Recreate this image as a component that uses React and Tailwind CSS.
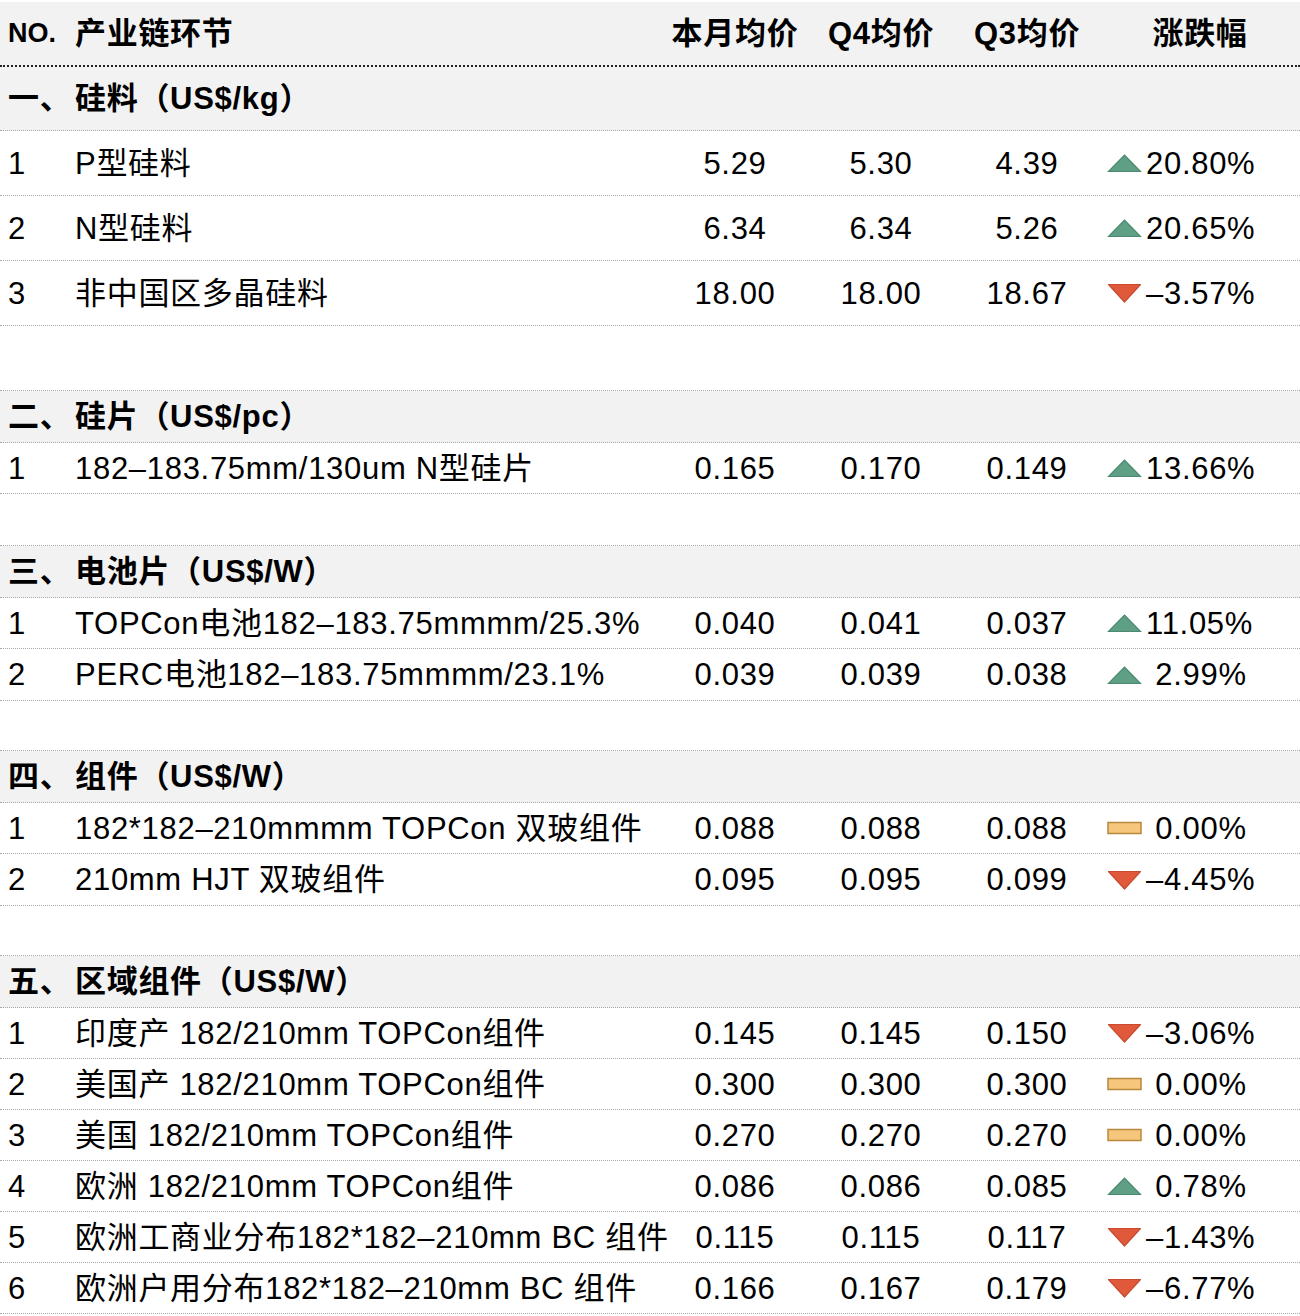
import React from 'react';

// 行类型: head 分节标题, item 数据行, gap 空行
const rows = [
  { type: 'head', h: 'h-[64px]', no: '一、', name: '硅料（US$/kg）' },
  { type: 'item', h: 'h-[65px]', no: '1', name: 'P型硅料', m: '5.29', q4: '5.30', q3: '4.39', dir: 'up', chg: '20.80%' },
  { type: 'item', h: 'h-[65px]', no: '2', name: 'N型硅料', m: '6.34', q4: '6.34', q3: '5.26', dir: 'up', chg: '20.65%' },
  { type: 'item', h: 'h-[65px]', no: '3', name: '非中国区多晶硅料', m: '18.00', q4: '18.00', q3: '18.67', dir: 'down', chg: '–3.57%' },
  { type: 'gap', h: 'h-[65px]' },
  { type: 'head', h: 'h-[52px]', no: '二、', name: '硅片（US$/pc）' },
  { type: 'item', h: 'h-[51px]', no: '1', name: '182–183.75mm/130um N型硅片', m: '0.165', q4: '0.170', q3: '0.149', dir: 'up', chg: '13.66%' },
  { type: 'gap', h: 'h-[52px]' },
  { type: 'head', h: 'h-[52px]', no: '三、', name: '电池片（US$/W）' },
  { type: 'item', h: 'h-[51px]', no: '1', name: 'TOPCon电池182–183.75mmmm/25.3%', m: '0.040', q4: '0.041', q3: '0.037', dir: 'up', chg: '11.05%' },
  { type: 'item', h: 'h-[52px]', no: '2', name: 'PERC电池182–183.75mmmm/23.1%', m: '0.039', q4: '0.039', q3: '0.038', dir: 'up', chg: ' 2.99%' },
  { type: 'gap', h: 'h-[50px]' },
  { type: 'head', h: 'h-[52px]', no: '四、', name: '组件（US$/W）' },
  { type: 'item', h: 'h-[51px]', no: '1', name: '182*182–210mmmm TOPCon 双玻组件', m: '0.088', q4: '0.088', q3: '0.088', dir: 'flat', chg: ' 0.00%' },
  { type: 'item', h: 'h-[52px]', no: '2', name: '210mm HJT 双玻组件', m: '0.095', q4: '0.095', q3: '0.099', dir: 'down', chg: '–4.45%' },
  { type: 'gap', h: 'h-[50px]' },
  { type: 'head', h: 'h-[52px]', no: '五、', name: '区域组件（US$/W）' },
  { type: 'item', h: 'h-[51px]', no: '1', name: '印度产 182/210mm TOPCon组件', m: '0.145', q4: '0.145', q3: '0.150', dir: 'down', chg: '–3.06%' },
  { type: 'item', h: 'h-[51px]', no: '2', name: '美国产 182/210mm TOPCon组件', m: '0.300', q4: '0.300', q3: '0.300', dir: 'flat', chg: ' 0.00%' },
  { type: 'item', h: 'h-[51px]', no: '3', name: '美国 182/210mm TOPCon组件', m: '0.270', q4: '0.270', q3: '0.270', dir: 'flat', chg: ' 0.00%' },
  { type: 'item', h: 'h-[51px]', no: '4', name: '欧洲 182/210mm TOPCon组件', m: '0.086', q4: '0.086', q3: '0.085', dir: 'up', chg: ' 0.78%' },
  { type: 'item', h: 'h-[51px]', no: '5', name: '欧洲工商业分布182*182–210mm BC 组件', m: '0.115', q4: '0.115', q3: '0.117', dir: 'down', chg: '–1.43%' },
  { type: 'item', h: 'h-[51px]', no: '6', name: '欧洲户用分布182*182–210mm BC 组件', m: '0.166', q4: '0.167', q3: '0.179', dir: 'down', chg: '–6.77%' },
];

const grid = 'grid grid-cols-[75px_587px_146px_146px_146px_1fr] items-center';
const line = 'border-b border-dotted border-[#a9a9a9]';

function TrendIcon({ dir }) {
  if (dir === 'up') {
    return (
      <svg width="35" height="20" viewBox="0 0 35 20" className="shrink-0">
        <polygon points="1.5,18.5 17.5,2 33.5,18.5" fill="#5f9f86" stroke="#4b8a70" strokeWidth="1.2" />
      </svg>
    );
  }
  if (dir === 'down') {
    return (
      <svg width="35" height="20" viewBox="0 0 35 20" className="shrink-0">
        <polygon points="1.5,1.5 33.5,1.5 17.5,19" fill="#e0593a" stroke="#c94a2e" strokeWidth="1.2" strokeLinejoin="round" />
      </svg>
    );
  }
  return (
    <svg width="35" height="20" viewBox="0 0 35 20" className="shrink-0">
      <rect x="1" y="4.5" width="33" height="11" fill="#f6c67c" stroke="#b8893c" strokeWidth="1.5" />
    </svg>
  );
}

export default function App() {
  return (
    <div
      className="w-[1300px] bg-white pt-[2px] text-[31px] leading-none tracking-[0.7px] text-black"
      style={{ fontFamily: '"Liberation Sans", "Noto Sans CJK SC", sans-serif' }}
    >
      {/* 表头 */}
      <div className={`${grid} h-[65px] bg-[#f2f2f2] border-b-2 border-dotted border-[#222] font-bold`}>
        <div className="pl-[8px] text-[27px] tracking-normal">NO.</div>
        <div>产业链环节</div>
        <div className="text-center">本月均价</div>
        <div className="text-center">Q4均价</div>
        <div className="text-center">Q3均价</div>
        <div className="text-center">涨跌幅</div>
      </div>

      {rows.map((r, i) => {
        if (r.type === 'gap') {
          return <div key={i} className={`${r.h} ${line}`} />;
        }
        if (r.type === 'head') {
          return (
            <div key={i} className={`${grid} ${r.h} ${line} bg-[#f2f2f2] font-bold`}>
              <div className="pl-[8px] whitespace-nowrap">{r.no}</div>
              <div className="col-span-5">{r.name}</div>
            </div>
          );
        }
        return (
          <div key={i} className={`${grid} ${r.h} ${line}`}>
            <div className="pl-[8px]">{r.no}</div>
            <div className="whitespace-nowrap">{r.name}</div>
            <div className="text-center">{r.m}</div>
            <div className="text-center">{r.q4}</div>
            <div className="text-center">{r.q3}</div>
            <div className="flex items-center gap-[4px] pl-[7px]">
              <TrendIcon dir={r.dir} />
              <span className="whitespace-pre">{r.chg}</span>
            </div>
          </div>
        );
      })}
    </div>
  );
}
